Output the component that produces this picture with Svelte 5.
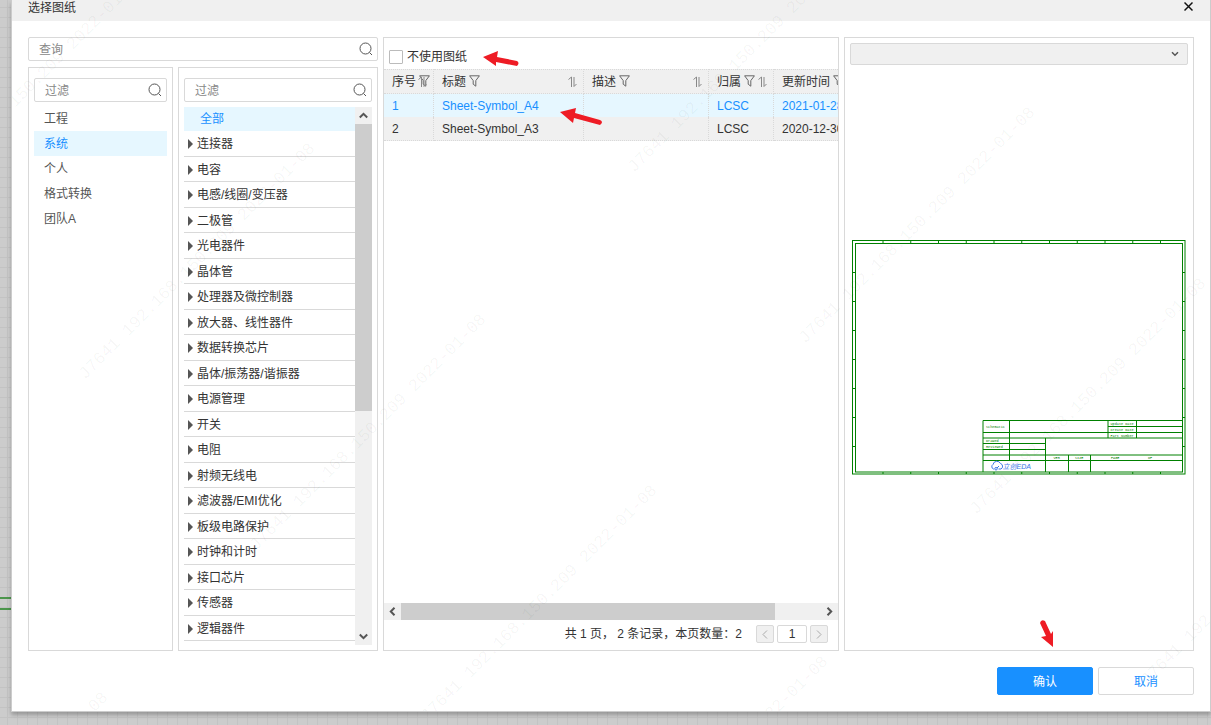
<script>
	let query = '';
	let groupFilter = '';
	let categoryFilter = '';
	let noSheet = false;
	let page = '1';
	let device = '';

	let groups = ['工程', '系统', '个人', '格式转换', '团队A'];
	let activeGroup = '系统';

	let categories = [
		'连接器',
		'电容',
		'电感/线圈/变压器',
		'二极管',
		'光电器件',
		'晶体管',
		'处理器及微控制器',
		'放大器、线性器件',
		'数据转换芯片',
		'晶体/振荡器/谐振器',
		'电源管理',
		'开关',
		'电阻',
		'射频无线电',
		'滤波器/EMI优化',
		'板级电路保护',
		'时钟和计时',
		'接口芯片',
		'传感器',
		'逻辑器件'
	];
	let activeCategory = '全部';

	let columns = ['序号', '标题', '描述', '归属', '更新时间'];
	let rows = [
		{ id: 1, title: 'Sheet-Symbol_A4', desc: '', owner: 'LCSC', time: '2021-01-28' },
		{ id: 2, title: 'Sheet-Symbol_A3', desc: '', owner: 'LCSC', time: '2020-12-30' }
	];
	let selected = 1;

	// lower left corner of every watermark line
	let marks = [
		[-86, 209],
		[85, 380],
		[256, 551],
		[427, 722],
		[-122, 929],
		[634, 173],
		[805, 344],
		[976, 515],
		[598, 893],
		[1147, 686]
	];

	let ticksX = Array.from({ length: 11 }, (_, i) => 62 + i * 55.5);
	let ticksY = Array.from({ length: 7 }, (_, i) => 65 + i * 58);
</script>

<div class="dialog">
	<header>
		<h1>选择图纸</h1>
		<button class="close" aria-label="关闭">
			<svg width="9" height="11" viewBox="0 0 9 11"><path d="M.5 1.5l8 8M8.500 1.500l-8 8" /></svg>
		</button>
	</header>

	<main>
		<section class="library">
			<label class="search">
				<input type="text" placeholder="查询" aria-label="查询" bind:value={query} />
				<svg width="14" height="14" viewBox="0 0 14 14"><circle cx="6.500" cy="6.500" r="5.500" /><path d="M10.500 10.500l2.500 2.500" /></svg>
			</label>
			<div class="lists">
				<div class="panel groups">
					<label class="search">
						<input type="text" placeholder="过滤" aria-label="过滤分组" bind:value={groupFilter} />
						<svg width="14" height="14" viewBox="0 0 14 14"><circle cx="6.500" cy="6.500" r="5.500" /><path d="M10.500 10.500l2.500 2.500" /></svg>
					</label>
					<ul>
						{#each groups as g}
							<li><button class:active={g === activeGroup} on:click={() => (activeGroup = g)}>{g}</button></li>
						{/each}
					</ul>
				</div>
				<div class="panel categories">
					<label class="search">
						<input type="text" placeholder="过滤" aria-label="过滤分类" bind:value={categoryFilter} />
						<svg width="14" height="14" viewBox="0 0 14 14"><circle cx="6.500" cy="6.500" r="5.500" /><path d="M10.500 10.500l2.500 2.500" /></svg>
					</label>
					<div class="scroller">
						<div class="tree">
							<button class="all" class:active={activeCategory === '全部'} on:click={() => (activeCategory = '全部')}>全部</button>
							{#each categories as c}
								<button class="node" class:active={activeCategory === c} on:click={() => (activeCategory = c)}>
									<i></i>{c}
								</button>
							{/each}
						</div>
						<div class="vbar">
							<button aria-label="向上"><svg width="9" height="7" viewBox="0 0 9 7"><path d="M.8 5.500L4.500 1.800l3.700 3.700" /></svg></button>
							<div class="track"><div class="thumb"></div></div>
							<button aria-label="向下"><svg width="9" height="7" viewBox="0 0 9 7"><path d="M.8 1.500l3.700 3.700 3.700-3.700" /></svg></button>
						</div>
					</div>
				</div>
			</div>
		</section>

		<section class="panel sheets">
			<label class="check"><input type="checkbox" bind:checked={noSheet} />不使用图纸</label>
			<div class="table-wrap">
				<table>
					<colgroup>
						<col class="c-id" /><col class="c-title" /><col class="c-desc" /><col class="c-owner" /><col class="c-time" />
					</colgroup>
					<thead>
						<tr>
							{#each columns as col}
								<th>
									<span>{col}</span>
									<svg class="filter" width="11" height="12" viewBox="0 0 11 12"><path d="M.6 .8h9.800L6.800 5.600v5.600L4.200 9.200V5.600z" /></svg>
									<svg class="sort" width="9" height="12" viewBox="0 0 9 12"><path d="M.5 3.500L3.500 1v10M6 1v9.500l2.500-2.500" /></svg>
								</th>
							{/each}
						</tr>
					</thead>
					<tbody>
						{#each rows as row}
							<tr class:active={row.id === selected} on:click={() => (selected = row.id)}>
								<td>{row.id}</td>
								<td>{row.title}</td>
								<td>{row.desc}</td>
								<td>{row.owner}</td>
								<td>{row.time}</td>
							</tr>
						{/each}
					</tbody>
				</table>
			</div>
			<div class="hbar">
				<button aria-label="向左"><svg width="7" height="9" viewBox="0 0 7 9"><path d="M5.500 .8L1.800 4.500l3.700 3.700" /></svg></button>
				<div class="track"><div class="thumb"></div></div>
				<button aria-label="向右"><svg width="7" height="9" viewBox="0 0 7 9"><path d="M1.500 .8l3.700 3.700-3.700 3.700" /></svg></button>
			</div>
			<div class="pager">
				<span>共 1 页， 2 条记录，本页数量：2</span>
				<button disabled aria-label="上一页"><svg width="6" height="9" viewBox="0 0 6 9"><path d="M5 .5l-4 4 4 4" /></svg></button>
				<input type="text" aria-label="页码" bind:value={page} />
				<button disabled aria-label="下一页"><svg width="6" height="9" viewBox="0 0 6 9"><path d="M1 .5l4 4-4 4" /></svg></button>
			</div>
		</section>

		<section class="panel preview">
			<div class="select">
				<select aria-label="器件" bind:value={device}><option value=""></option></select>
				<svg width="8" height="6" viewBox="0 0 8 6"><path d="M1 1.200l3 3 3-3" /></svg>
			</div>
			<div class="canvas">
				<svg class="sheet" viewBox="0 0 668 470">
					<g class="frame">
						<rect x="1" y="1" width="665" height="467" />
						<rect x="7" y="7" width="654" height="457" />
						{#each ticksX as x}
							<path d="M{x} 1v6M{x} 464v4" />
						{/each}
						{#each ticksY as y}
							<path d="M1 {y}h6M661 {y}h5" />
						{/each}
						<path d="M262 464V361H661M262 385H661M262 396H661M262 407H387M262 419H387M262 430H661M262 441H661" />
						<path d="M315 361V441M512 361V396M569 361V396M512 373H661M387 396V464M433 430V464M477 430V464" />
					</g>
					<g class="note">
						<text x="268" y="375">Schematic</text>
						<text x="517" y="369">Update Date</text>
						<text x="517" y="381">Create Date</text>
						<text x="517" y="393">Part Number</text>
						<text x="268" y="403">Drawed</text>
						<text x="268" y="415">Reviewed</text>
						<text x="403" y="437">VER</text>
						<text x="446" y="437">SIZE</text>
						<text x="518" y="437">PAGE</text>
						<text x="592" y="437">OF</text>
					</g>
					<path class="cloud" d="M284 458h-1a5 5 0 0 1-1-9 8 8 0 0 1 15-2 6 6 0 0 1 1 11h-5M288 455a2 2 0 1 0 0 5 2 2 0 1 0 0-5M290 456l4-4" />
					<text class="brand" x="301" y="458">立创EDA</text>
				</svg>
			</div>
		</section>
	</main>

	<footer>
		<button class="primary">确认</button>
		<button>取消</button>
	</footer>

	<svg class="watermark">
		{#each marks as [x, y]}
			<text transform="translate({x - 12} {y}) rotate(-45)">J7641 192.168.150.209 2022-01-08</text>
		{/each}
	</svg>
</div>

<svg class="arrows">
	<path d="M483 57l15-6-1 6 20 4q3 2 0 5l-21-4v4z" />
	<path d="M560 112l16-4-1 5 25 7q4 2 0 5l-26-7-1 5z" />
	<path d="M1053 647l-12-10 5-1-6-13q1-4 5-2l6 13 2-3z" />
</svg>

<style>
	:global(body) {
		background-color: #ccc;
		background-image: linear-gradient(#c3c3c3 1px, transparent 1px),
			linear-gradient(90deg, #c3c3c3 1px, transparent 1px);
		background-size: 10px 10px;
		background-position: 7px 7px;
		overflow: hidden;
	}
	:global(#app) {
		position: relative;
		display: flex;
		height: 100vh;
		box-sizing: border-box;
		padding: 0 0 13px 11px;
		font: 12px/16px 'Liberation Sans', 'Noto Sans CJK SC', sans-serif;
		color: #333;
	}
	/* wires of the schematic behind the dialog */
	:global(#app)::before {
		content: '';
		position: absolute;
		left: 0;
		top: 597px;
		width: 11px;
		height: 9px;
		border-top: 2px solid #4c964c;
		border-bottom: 2px solid #4c964c;
	}
	* {
		box-sizing: border-box;
	}
	button,
	input,
	select {
		font: inherit;
		color: inherit;
		margin: 0;
		padding: 0;
		border: 0;
		background: none;
		border-radius: 0;
		outline: none;
	}
	button {
		cursor: pointer;
	}
	svg {
		fill: none;
		stroke: #555;
		display: block;
	}
	.dialog {
		position: relative;
		flex: 1;
		min-width: 0;
		display: flex;
		flex-direction: column;
		background: #fff;
		border: 1px solid #ccc;
		border-top: 0;
		box-shadow: 0 3px 4px rgba(0, 0, 0, 0.25);
	}
	header {
		display: flex;
		justify-content: space-between;
		align-items: flex-start;
		height: 21px;
		padding: 0 17px 0 16px;
		background: #f0f0f0;
	}
	h1 {
		margin: 0;
		font-size: 12px;
		font-weight: normal;
	}
	.close {
		padding-top: 1px;
	}
	.close svg {
		stroke: #111;
		stroke-width: 1.5;
	}
	main {
		flex: 1;
		min-height: 0;
		display: flex;
		gap: 5px;
		padding: 16px 16px 0;
	}
	.panel {
		border: 1px solid #d9d9d9;
		display: flex;
		flex-direction: column;
		min-width: 0;
	}
	.library {
		width: 350px;
		display: flex;
		flex-direction: column;
		gap: 6px;
	}
	.lists {
		flex: 1;
		min-height: 0;
		display: flex;
		gap: 5px;
	}
	.groups {
		width: 145px;
		padding: 10px 5px 5px;
	}
	.categories {
		flex: 1;
		padding: 10px 5px 5px;
	}
	.search {
		display: flex;
		align-items: center;
		height: 24px;
		flex: none;
		padding: 0 4px 0 10px;
		border: 1px solid #d9d9d9;
		border-radius: 2px;
	}
	.search input {
		flex: 1;
		min-width: 0;
		height: 22px;
		padding-top: 2px;
	}
	.search input::placeholder {
		color: #888;
		opacity: 1;
	}
	ul {
		list-style: none;
		margin: 4px 0 0;
		padding: 0;
	}
	li button {
		display: block;
		width: 100%;
		height: 25px;
		padding-left: 10px;
		text-align: left;
		color: #555;
	}
	li .active,
	.tree .active,
	tr.active td {
		background: #e6f7ff;
		color: #1890ff;
	}
	.scroller {
		flex: 1;
		min-height: 0;
		display: flex;
		margin-top: 5px;
	}
	.tree {
		flex: 1;
		display: flex;
		flex-direction: column;
		padding-bottom: 4px;
	}
	.all {
		flex: none;
		height: 24px;
		padding-left: 16px;
		text-align: left;
	}
	.node {
		flex: 1;
		min-height: 0;
		display: flex;
		align-items: center;
		padding: 2px 0 0 4px;
		border-bottom: 1px solid #d9d9d9;
	}
	.node i {
		margin-right: 4px;
		border: solid transparent;
		border-width: 5px 0 5px 5px;
		border-left-color: #555;
	}
	.vbar {
		width: 17px;
		display: flex;
		flex-direction: column;
		background: #f0f0f0;
	}
	.vbar button,
	.hbar button {
		display: flex;
		align-items: center;
		justify-content: center;
		flex: none;
		width: 17px;
		height: 17px;
	}
	.vbar svg,
	.hbar svg {
		stroke-width: 2;
	}
	.track {
		flex: 1;
	}
	.thumb {
		background: #cdcdcd;
	}
	.vbar .thumb {
		height: 57%;
	}
	.hbar .thumb {
		width: 89%;
		height: 17px;
	}
	.sheets {
		flex: 1;
	}
	.check {
		display: flex;
		align-items: center;
		gap: 4px;
		height: 31px;
		padding: 7px 5px 0;
	}
	.check input {
		appearance: none;
		width: 14px;
		height: 14px;
		border: 1px solid #bbb;
		border-radius: 1px;
		background: #fff;
	}
	.check input:checked {
		background: #1890ff;
	}
	.table-wrap {
		flex: 1;
		min-height: 0;
		overflow: hidden;
	}
	table {
		width: 512px;
		min-width: 100%;
		table-layout: fixed;
		border-spacing: 0;
	}
	.c-id {
		width: 50px;
	}
	.c-title {
		width: 150px;
	}
	.c-desc {
		width: 125px;
	}
	.c-owner {
		width: 65px;
	}
	th,
	td {
		height: 23px;
		padding: 0 0 0 8px;
		text-align: left;
		font-weight: normal;
		white-space: nowrap;
		background: #f0f0f0;
		border-right: 1px dotted #d9d9d9;
	}
	th {
		position: relative;
		height: 25px;
		padding-top: 1px;
		border-top: 1px dotted #d9d9d9;
		border-bottom: 1px dotted #d9d9d9;
	}
	tbody tr:last-child td {
		height: 24px;
		border-bottom: 1px dotted #d9d9d9;
	}
	th svg {
		display: inline-block;
		vertical-align: middle;
		margin-top: -3px;
		stroke: #666;
	}
	th .sort {
		position: absolute;
		right: 6px;
		top: 6px;
		margin: 0;
		stroke: #888;
	}
	.hbar {
		display: flex;
		background: #f0f0f0;
	}
	.pager {
		display: flex;
		justify-content: flex-end;
		align-items: center;
		gap: 3px;
		height: 30px;
		padding: 0 10px 2px 0;
	}
	.pager span {
		margin-right: 11px;
	}
	.pager button,
	.pager input {
		width: 18px;
		height: 18px;
		border: 1px solid #d9d9d9;
		border-radius: 2px;
		text-align: center;
	}
	.pager button {
		display: flex;
		align-items: center;
		justify-content: center;
		background: #f0f0f0;
	}
	.pager button svg {
		stroke: #aaa;
	}
	.pager input {
		width: 30px;
	}
	.preview {
		width: 350px;
		padding: 5px;
	}
	.select {
		position: relative;
	}
	.select select {
		display: block;
		appearance: none;
		width: 100%;
		height: 22px;
		background: #f0f0f0;
		border: 1px solid #d9d9d9;
		border-radius: 2px;
	}
	.select svg {
		position: absolute;
		right: 9px;
		top: 8px;
		stroke-width: 1.5;
		pointer-events: none;
	}
	.canvas {
		flex: 1;
		display: flex;
		align-items: center;
		padding: 5px 2px 0;
	}
	.sheet {
		width: 100%;
	}
	.frame {
		stroke: #008000;
		stroke-width: 2;
	}
	.note {
		font: 7px 'Liberation Mono', monospace;
		fill: #008000;
		stroke: none;
	}
	.cloud {
		stroke: #3b78e7;
		stroke-width: 2;
	}
	.brand {
		font: italic 14px 'Liberation Sans', 'Noto Sans CJK SC', sans-serif;
		fill: #3b78e7;
		stroke: none;
	}
	footer {
		display: flex;
		justify-content: flex-end;
		gap: 5px;
		padding: 16px;
	}
	footer button {
		width: 96px;
		height: 28px;
		padding-top: 2px;
		border: 1px solid #d9d9d9;
		border-radius: 2px;
		color: #1890ff;
	}
	footer .primary {
		background: #1890ff;
		border-color: #1890ff;
		color: #fff;
	}
	.watermark,
	.arrows {
		position: absolute;
		inset: 0;
		width: 100%;
		height: 100%;
		pointer-events: none;
	}
	.watermark text {
		font: 17px 'Liberation Mono', monospace;
		fill: rgba(0, 0, 0, 0.045);
		stroke: none;
	}
	.arrows {
		fill: #ee1c25;
		stroke: none;
	}
</style>
